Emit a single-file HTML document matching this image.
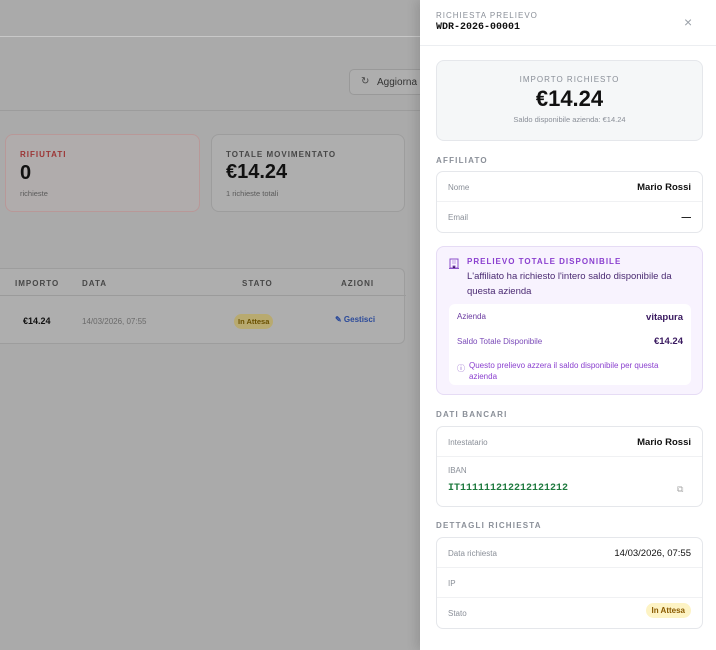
<!DOCTYPE html>
<html><head><meta charset="utf-8"><style>
*{box-sizing:border-box;margin:0;padding:0}
body{width:716px;height:650px;overflow:hidden;font-family:"Liberation Sans",sans-serif;background:#aaaaaa;position:relative}
.a{position:absolute}
.card{position:absolute;border:1px solid #9d9d9d;border-radius:8px;background:#aeaeae}
.lbl{font-size:8px;font-weight:bold;letter-spacing:1px;color:#474747}
.panel{position:absolute;left:420px;top:0;width:296px;height:650px;background:#fff;box-shadow:-4px 0 10px rgba(0,0,0,.12)}
.sec{font-size:8px;font-weight:bold;letter-spacing:1.2px;color:#8a8f98;position:absolute;left:16px}
.box{position:absolute;left:16px;width:267px;border:1px solid #e5e7eb;border-radius:7px;background:#fff}
.row{position:relative;height:30px;border-bottom:1px solid #f0f1f3;font-size:8px;color:#8a8f98}
.row:last-child{border-bottom:none}
.row .k{position:absolute;left:11px;top:11px}
.row .v{position:absolute;right:11px;top:10px;font-size:9.5px;color:#111;font-weight:bold}
.badge{background:#fdf3c4;color:#8a5a00;font-weight:bold;font-size:8px;padding:3px 6px;border-radius:9px}
</style></head><body>
<div class="a" style="left:0;top:36px;width:420px;height:1px;background:#c8c8c8"></div>
<div class="a" style="left:0;top:110px;width:420px;height:1px;background:#9c9c9c"></div>
<div class="a" style="left:349px;top:69px;width:80px;height:26px;border:1px solid #999;border-radius:5px;background:#aeaeae;font-size:10px;color:#333;padding:7px 0 0 27px">Aggiorna</div>
<div class="a" style="left:361px;top:76px;font-size:10px;color:#444">↻</div>
<div class="card" style="left:5px;top:134px;width:195px;height:78px;border-color:#b89898;background:#b0acac">
 <div class="lbl a" style="left:14px;top:15px;color:#9c3535">RIFIUTATI</div>
 <div class="a" style="left:14px;top:27px;font-size:20px;font-weight:bold;color:#111">0</div>
 <div class="a" style="left:14px;top:54px;font-size:7.5px;color:#5a5a5a">richieste</div>
</div>
<div class="card" style="left:211px;top:134px;width:194px;height:78px">
 <div class="lbl a" style="left:14px;top:15px">TOTALE MOVIMENTATO</div>
 <div class="a" style="left:14px;top:26px;font-size:20px;font-weight:bold;color:#111">€14.24</div>
 <div class="a" style="left:14px;top:54px;font-size:7.5px;color:#5a5a5a">1 richieste totali</div>
</div>
<div class="card" style="left:-10px;top:268px;width:415px;height:76px;border-radius:6px">
 <div class="a" style="left:0;top:26px;width:415px;height:1px;background:#9b9b9b"></div>
 <div class="lbl a" style="left:24px;top:10px">IMPORTO</div>
 <div class="lbl a" style="left:91px;top:10px">DATA</div>
 <div class="lbl a" style="left:251px;top:10px">STATO</div>
 <div class="lbl a" style="left:350px;top:10px">AZIONI</div>
 <div class="a" style="left:32px;top:47px;font-size:9px;font-weight:bold;color:#111">€14.24</div>
 <div class="a" style="left:91px;top:48px;font-size:8px;color:#6a6a6a">14/03/2026, 07:55</div>
 <div class="a" style="left:243px;top:45px;font-size:7.5px;font-weight:bold;color:#6a5000;background:#b8aa70;padding:3px 4px;border-radius:8px">In Attesa</div>
 <div class="a" style="left:344px;top:46px;font-size:8px;color:#2b4a9a;font-weight:bold">✎ Gestisci</div>
</div>

<div class="panel">
 <div class="a" style="left:0;top:45px;width:296px;height:1px;background:#eceef1"></div>
 <div class="a" style="left:16px;top:11px;font-size:8px;letter-spacing:1px;color:#8a8f98">RICHIESTA PRELIEVO</div>
 <div class="a" style="left:16px;top:22px;font-family:'Liberation Mono',monospace;font-size:10px;font-weight:bold;color:#111">WDR-2026-00001</div>
 <div class="a" style="left:264px;top:14px;font-size:14px;color:#9aa0a8">×</div>

 <div class="a" style="left:16px;top:60px;width:267px;height:81px;background:#f5f7f8;border:1px solid #e5e7eb;border-radius:8px;text-align:center">
  <div style="margin-top:14px;font-size:8px;letter-spacing:1px;color:#8a8f98">IMPORTO RICHIESTO</div>
  <div style="font-size:22px;font-weight:bold;color:#111;margin-top:2px">€14.24</div>
  <div style="font-size:7.5px;color:#8a8f98;margin-top:3px">Saldo disponibile azienda: €14.24</div>
 </div>
 <div class="sec" style="top:156px">AFFILIATO</div>
 <div class="box" style="top:171px">
  <div class="row"><span class="k">Nome</span><span class="v">Mario Rossi</span></div>
  <div class="row"><span class="k">Email</span><span class="v">—</span></div>
 </div>

 <div class="a" style="left:16px;top:246px;width:267px;height:149px;background:#f8f3fe;border:1px solid #e6dcf5;border-radius:8px">
  <svg class="a" style="left:12px;top:11px" width="10" height="11" viewBox="0 0 10 11"><rect x="1" y="1" width="8" height="9" fill="none" stroke="#8b4fc9"/><path d="M0 10.5h10M3.5 3h1M5.5 3h1M3.5 5h1M5.5 5h1M4 10V8h2v2" stroke="#8b4fc9" stroke-width="0.9"/></svg>
  <div class="a" style="left:30px;top:10px;font-size:8px;font-weight:bold;letter-spacing:1px;color:#8a3fcf">PRELIEVO TOTALE DISPONIBILE</div>
  <div class="a" style="left:30px;top:22px;width:235px;font-size:9.5px;line-height:15px;color:#4a2a72">L'affiliato ha richiesto l'intero saldo disponibile da questa azienda</div>
  <div class="a" style="left:12px;top:57px;width:242px;height:81px;background:#fff;border-radius:6px">
   <div class="a" style="left:8px;top:8px;font-size:8px;color:#6a3aa0">Azienda</div>
   <div class="a" style="right:8px;top:8px;font-size:9.5px;font-weight:bold;color:#3a1a60">vitapura</div>
   <div class="a" style="left:8px;top:33px;font-size:8px;color:#7a4ab8">Saldo Totale Disponibile</div>
   <div class="a" style="right:8px;top:32px;font-size:9.5px;font-weight:bold;color:#3a1a60">€14.24</div>
   <div class="a" style="left:8px;top:59px;font-size:8px;color:#8a5ac8">ⓘ</div>
   <div class="a" style="left:20px;top:56px;width:215px;font-size:8px;line-height:11px;color:#8a3fcf">Questo prelievo azzera il saldo disponibile per questa azienda</div>
  </div>
 </div>

 <div class="sec" style="top:410px">DATI BANCARI</div>
 <div class="box" style="top:426px;height:81px">
  <div class="row" style="height:30px"><span class="k">Intestatario</span><span class="v">Mario Rossi</span></div>
  <div class="a" style="left:11px;top:39px;font-size:8px;color:#8a8f98">IBAN</div>
  <div class="a" style="left:11px;top:56px;font-family:'Liberation Mono',monospace;font-size:10px;font-weight:bold;color:#1e7a3e">IT111111212212121212</div>
  <div class="a" style="left:240px;top:57px;font-size:9px;color:#aaa">⧉</div>
 </div>

 <div class="sec" style="top:521px">DETTAGLI RICHIESTA</div>
 <div class="box" style="top:537px">
  <div class="row"><span class="k">Data richiesta</span><span class="v" style="font-weight:normal">14/03/2026, 07:55</span></div>
  <div class="row"><span class="k">IP</span></div>
  <div class="row"><span class="k">Stato</span><span class="v" style="top:7px"><span class="badge">In Attesa</span></span></div>
 </div>
</div>
</body></html>
